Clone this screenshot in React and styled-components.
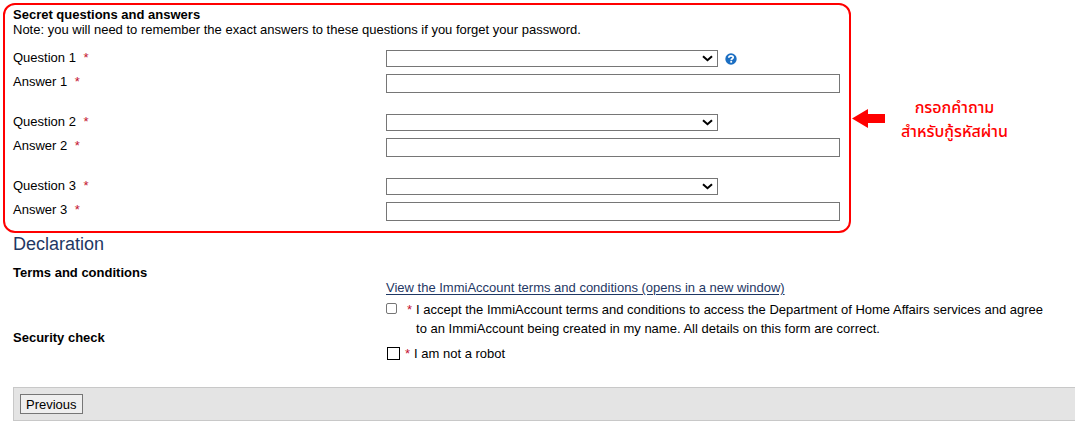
import React from "react";
import styled, { createGlobalStyle } from "styled-components";

const GlobalStyle = createGlobalStyle`
  *, *::before, *::after { box-sizing: border-box; }
  body {
    margin: 0;
    background: #fff;
    color: #000;
    font: 13px/15px "Liberation Sans", Arial, sans-serif;
  }
`;

const Page = styled.form`
  padding: 3px 0 12px;
`;

const Top = styled.div`
  display: flex;
  align-items: center;
  padding-left: 3px;
`;

const Frame = styled.section`
  flex: 0 1 848px;
  min-width: 0;
  padding: 2px 9px 10px 8px;
  border: 2px solid #ff0000;
  border-radius: 12px;
`;

const Heading = styled.h3`
  margin: 0;
  font-size: 13px;
  line-height: 15px;
  font-weight: bold;
`;

const Note = styled.p`
  margin: 0;
`;

const Questions = styled.div`
  display: flex;
  flex-direction: column;
  gap: 21px;
  padding-top: 13px;
`;

const Pair = styled.div`
  display: flex;
  flex-direction: column;
  gap: 7px;
`;

const Field = styled.div`
  display: grid;
  grid-template-columns: 373px minmax(0, 1fr);
`;

const Label = styled.label`
  line-height: 15px;
`;

const Star = styled.span`
  color: #c4122f;
  margin-left: ${(p) => (p.$spaced ? "4px" : "0")};
`;

const Control = styled.div`
  display: flex;
  align-items: center;
  gap: 7px;
`;

const SelectBox = styled.div`
  position: relative;
  flex: 0 1 332px;
  height: 17px;
`;

const Select = styled.select`
  display: block;
  appearance: none;
  width: 100%;
  height: 17px;
  padding: 0 20px 0 4px;
  border: 1px solid #767676;
  border-radius: 0;
  background: #fff;
  font: inherit;
`;

const Chevron = styled.svg`
  position: absolute;
  right: 5px;
  top: 5px;
  width: 11px;
  height: 7px;
  pointer-events: none;
`;

const Help = styled.button`
  display: flex;
  width: 12px;
  height: 12px;
  padding: 0;
  border: 0;
  background: none;
`;

const TextInput = styled.input`
  width: 100%;
  height: 19px;
  padding: 0 4px;
  border: 1px solid #767676;
  border-radius: 0;
  font: inherit;
`;

const Callout = styled.aside`
  display: flex;
  align-items: center;
  gap: 16px;
  padding-left: 1px;
  color: #ff0000;
`;

const Arrow = styled.svg`
  flex: none;
  width: 33px;
  height: 19px;
`;

const CalloutText = styled.p`
  margin: 0;
  padding-top: 4px;
  font: 500 16px/24px "Noto Sans Thai", "Noto Sans", "Liberation Sans", sans-serif;
  text-align: center;
  white-space: nowrap;
`;

const Declaration = styled.section`
  padding-left: 13px;
`;

const Title = styled.h2`
  margin: 0;
  color: #1f3864;
  font-size: 18px;
  line-height: 22px;
  font-weight: normal;
`;

const Columns = styled.div`
  display: grid;
  grid-template-columns: 373px minmax(0, 1fr);
  padding-top: 10px;
`;

const Headings = styled.div`
  display: flex;
  flex-direction: column;
  gap: 50px;
`;

const Terms = styled.div`
  display: flex;
  flex-direction: column;
  align-items: flex-start;
  padding: 15px 24px 0 0;
`;

const TermsLink = styled.a`
  color: #1f3864;
  text-underline-offset: 2px;
`;

const Agree = styled.div`
  display: flex;
  align-items: flex-start;
  gap: 9px;
  padding-top: 5px;
  line-height: 19px;
`;

const AgreeText = styled.label`
  display: flex;
  gap: 4px;
`;

const Check = styled.input`
  appearance: none;
  flex: none;
  width: ${(p) => p.$size};
  height: ${(p) => p.$size};
  margin: ${(p) => p.$margin};
  border: 1px solid ${(p) => p.$color};
  border-radius: ${(p) => p.$radius};
  background: #fff;
  &:checked { background: #1f3864; }
`;

const Robot = styled.div`
  display: flex;
  align-items: center;
  gap: 5px;
  padding-top: 8px;
`;

const Footer = styled.footer`
  margin: 26px 0 0 13px;
  padding: 6px;
  border: 1px solid #c8c8c8;
  border-right: 0;
  background: #e4e4e4;
`;

const Previous = styled.button`
  display: block;
  height: 20px;
  padding: 0 5px;
  border: 1px solid #767676;
  border-radius: 0;
  background: #efefef;
  color: #000;
  font: 13px/15px "Liberation Sans", Arial, sans-serif;
`;

function HelpIcon() {
  return (
    <svg viewBox="0 0 12 12" width="12" height="12" aria-hidden="true">
      <circle cx="6" cy="6" r="5.7" fill="#1b6ec2" />
      <path d="M3.8 4.7C3.9 3.3 4.8 2.8 6 2.8s2.2.6 2.2 1.7C8.2 5.8 6.2 5.7 6.2 7.2" fill="none" stroke="#fff" strokeWidth="1.7" />
      <rect x="5.3" y="8" width="1.8" height="1.7" fill="#fff" />
    </svg>
  );
}

function Question({ n, help }) {
  return (
    <Pair>
      <Field>
        <Label htmlFor={`question${n}`}>
          Question {n} <Star $spaced>*</Star>
        </Label>
        <Control>
          <SelectBox>
            <Select id={`question${n}`} defaultValue="">
              <option value=""></option>
            </Select>
            <Chevron viewBox="0 0 11 7" aria-hidden="true">
              <path d="M1 1.2 5.5 5.2 10 1.2" fill="none" stroke="#000" strokeWidth="2" />
            </Chevron>
          </SelectBox>
          {help && (
            <Help type="button" aria-label="Help">
              <HelpIcon />
            </Help>
          )}
        </Control>
      </Field>
      <Field>
        <Label htmlFor={`answer${n}`}>
          Answer {n} <Star $spaced>*</Star>
        </Label>
        <TextInput id={`answer${n}`} type="text" />
      </Field>
    </Pair>
  );
}

export default function App() {
  return (
    <>
      <GlobalStyle />
      <Page onSubmit={(e) => e.preventDefault()}>
        <Top>
          <Frame>
            <Heading>Secret questions and answers</Heading>
            <Note>
              Note: you will need to remember the exact answers to these questions if you forget your password.
            </Note>
            <Questions>
              <Question n={1} help />
              <Question n={2} />
              <Question n={3} />
            </Questions>
          </Frame>
          <Callout>
            <Arrow viewBox="0 0 33 19" aria-hidden="true">
              <path d="M0 9.5 16 0v5h17v9H16v5z" fill="#ff0000" />
            </Arrow>
            <CalloutText lang="th">
              กรอกคำถาม
              <br />
              สำหรับกู้รหัสผ่าน
            </CalloutText>
          </Callout>
        </Top>
        <Declaration>
          <Title>Declaration</Title>
          <Columns>
            <Headings>
              <Heading>Terms and conditions</Heading>
              <Heading>Security check</Heading>
            </Headings>
            <Terms>
              <TermsLink href="#terms">
                View the ImmiAccount terms and conditions (opens in a new window)
              </TermsLink>
              <Agree>
                <Check id="accept" type="checkbox" $size="11px" $margin="3px 1px 0 0" $color="#767676" $radius="2px" />
                <AgreeText htmlFor="accept">
                  <Star>*</Star>
                  <span>
                    I accept the ImmiAccount terms and conditions to access the Department of Home Affairs services and agree to an ImmiAccount being created in my name. All details on this form are correct.
                  </span>
                </AgreeText>
              </Agree>
              <Robot>
                <Check id="robot" type="checkbox" $size="13px" $margin="0 0 0 1px" $color="#000" $radius="0" />
                <AgreeText htmlFor="robot">
                  <Star>*</Star>
                  <span>I am not a robot</span>
                </AgreeText>
              </Robot>
            </Terms>
          </Columns>
        </Declaration>
        <Footer>
          <Previous type="button">Previous</Previous>
        </Footer>
      </Page>
    </>
  );
}
